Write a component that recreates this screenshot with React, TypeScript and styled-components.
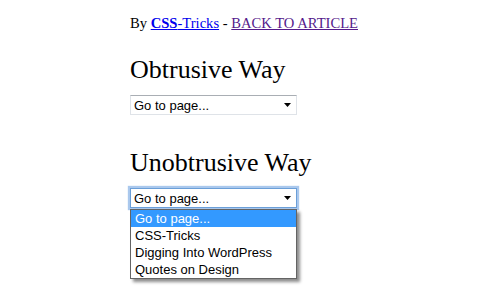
import React from 'react';
import styled, { createGlobalStyle } from 'styled-components';

const GlobalStyle = createGlobalStyle`
  html, body {
    margin: 0;
    padding: 0;
    background: #fff;
  }
`;

const Page = styled.div`
  box-sizing: border-box;
  min-height: 300px;
  padding: 14px 0 0 130px;
  font-family: "Liberation Serif", "Times New Roman", serif;
  color: #000;
  background: #fff;
`;

const Byline = styled.p`
  margin: 0;
  font-size: 14.6px;
  line-height: 18px;
`;

const Link = styled.a<{ $visited?: boolean }>`
  color: ${p => (p.$visited ? '#551a8b' : '#0000ee')};
  text-decoration: underline;
`;

const Heading = styled.h2<{ $first?: boolean }>`
  margin: ${p => (p.$first ? '23px' : '33px')} 0 10px;
  font-size: 26px;
  line-height: 30px;
  font-weight: normal;
`;

const SelectWrap = styled.div`
  position: relative;
  width: 167px;
  height: 20px;
`;

const SelectBox = styled.div<{ $focused?: boolean }>`
  box-sizing: border-box;
  display: flex;
  align-items: center;
  justify-content: space-between;
  width: 167px;
  height: 20px;
  padding: 1px 5px 0 3px;
  font-family: "Liberation Sans", Arial, sans-serif;
  font-size: 13px;
  line-height: 18px;
  background: #fff;
  border: 1px solid ${p => (p.$focused ? '#6b9fd8' : '#dfe3e8')};
  border-top-color: ${p => (p.$focused ? '#6b9fd8' : '#a9aeb4')};
  box-shadow: ${p => (p.$focused ? '0 0 1px 2px rgba(125, 170, 228, 0.65)' : 'none')};
`;

const Arrow = styled.svg`
  display: block;
  margin-top: -1px;
`;

const DropList = styled.div`
  position: absolute;
  top: 21px;
  left: 0;
  z-index: 2;
  box-sizing: border-box;
  width: 167px;
  background: #fff;
  border: 1px solid #646464;
  box-shadow: 3px 3px 3px rgba(0, 0, 0, 0.45);
  font-family: "Liberation Sans", Arial, sans-serif;
  font-size: 13px;
`;

const DropItem = styled.div<{ $active?: boolean }>`
  height: 17px;
  line-height: 17px;
  padding-left: 4px;
  white-space: nowrap;
  background: ${p => (p.$active ? '#3399ff' : '#fff')};
  color: ${p => (p.$active ? '#fff' : '#000')};
`;

const items = ['Go to page...', 'CSS-Tricks', 'Digging Into WordPress', 'Quotes on Design'];

const PageSelect = ({ expanded = false }: { expanded?: boolean }) => (
  <SelectWrap>
    <SelectBox $focused={expanded}>
      <span>Go to page...</span>
      <Arrow width="7" height="4" viewBox="0 0 7 4">
        <polygon points="0,0 7,0 3.5,4" fill="#000" />
      </Arrow>
    </SelectBox>
    {expanded ? (
      <DropList>
        {items.map((label, i) => (
          <DropItem key={label} $active={i === 0}>{label}</DropItem>
        ))}
      </DropList>
    ) : null}
  </SelectWrap>
);

export default function App() {
  return (
    <>
      <GlobalStyle />
      <Page>
        <Byline>
          By <Link href="#"><b>CSS</b>-Tricks</Link> - <Link href="#" $visited>BACK TO ARTICLE</Link>
        </Byline>
        <Heading $first>Obtrusive Way</Heading>
        <PageSelect />
        <Heading>Unobtrusive Way</Heading>
        <PageSelect expanded />
      </Page>
    </>
  );
}
